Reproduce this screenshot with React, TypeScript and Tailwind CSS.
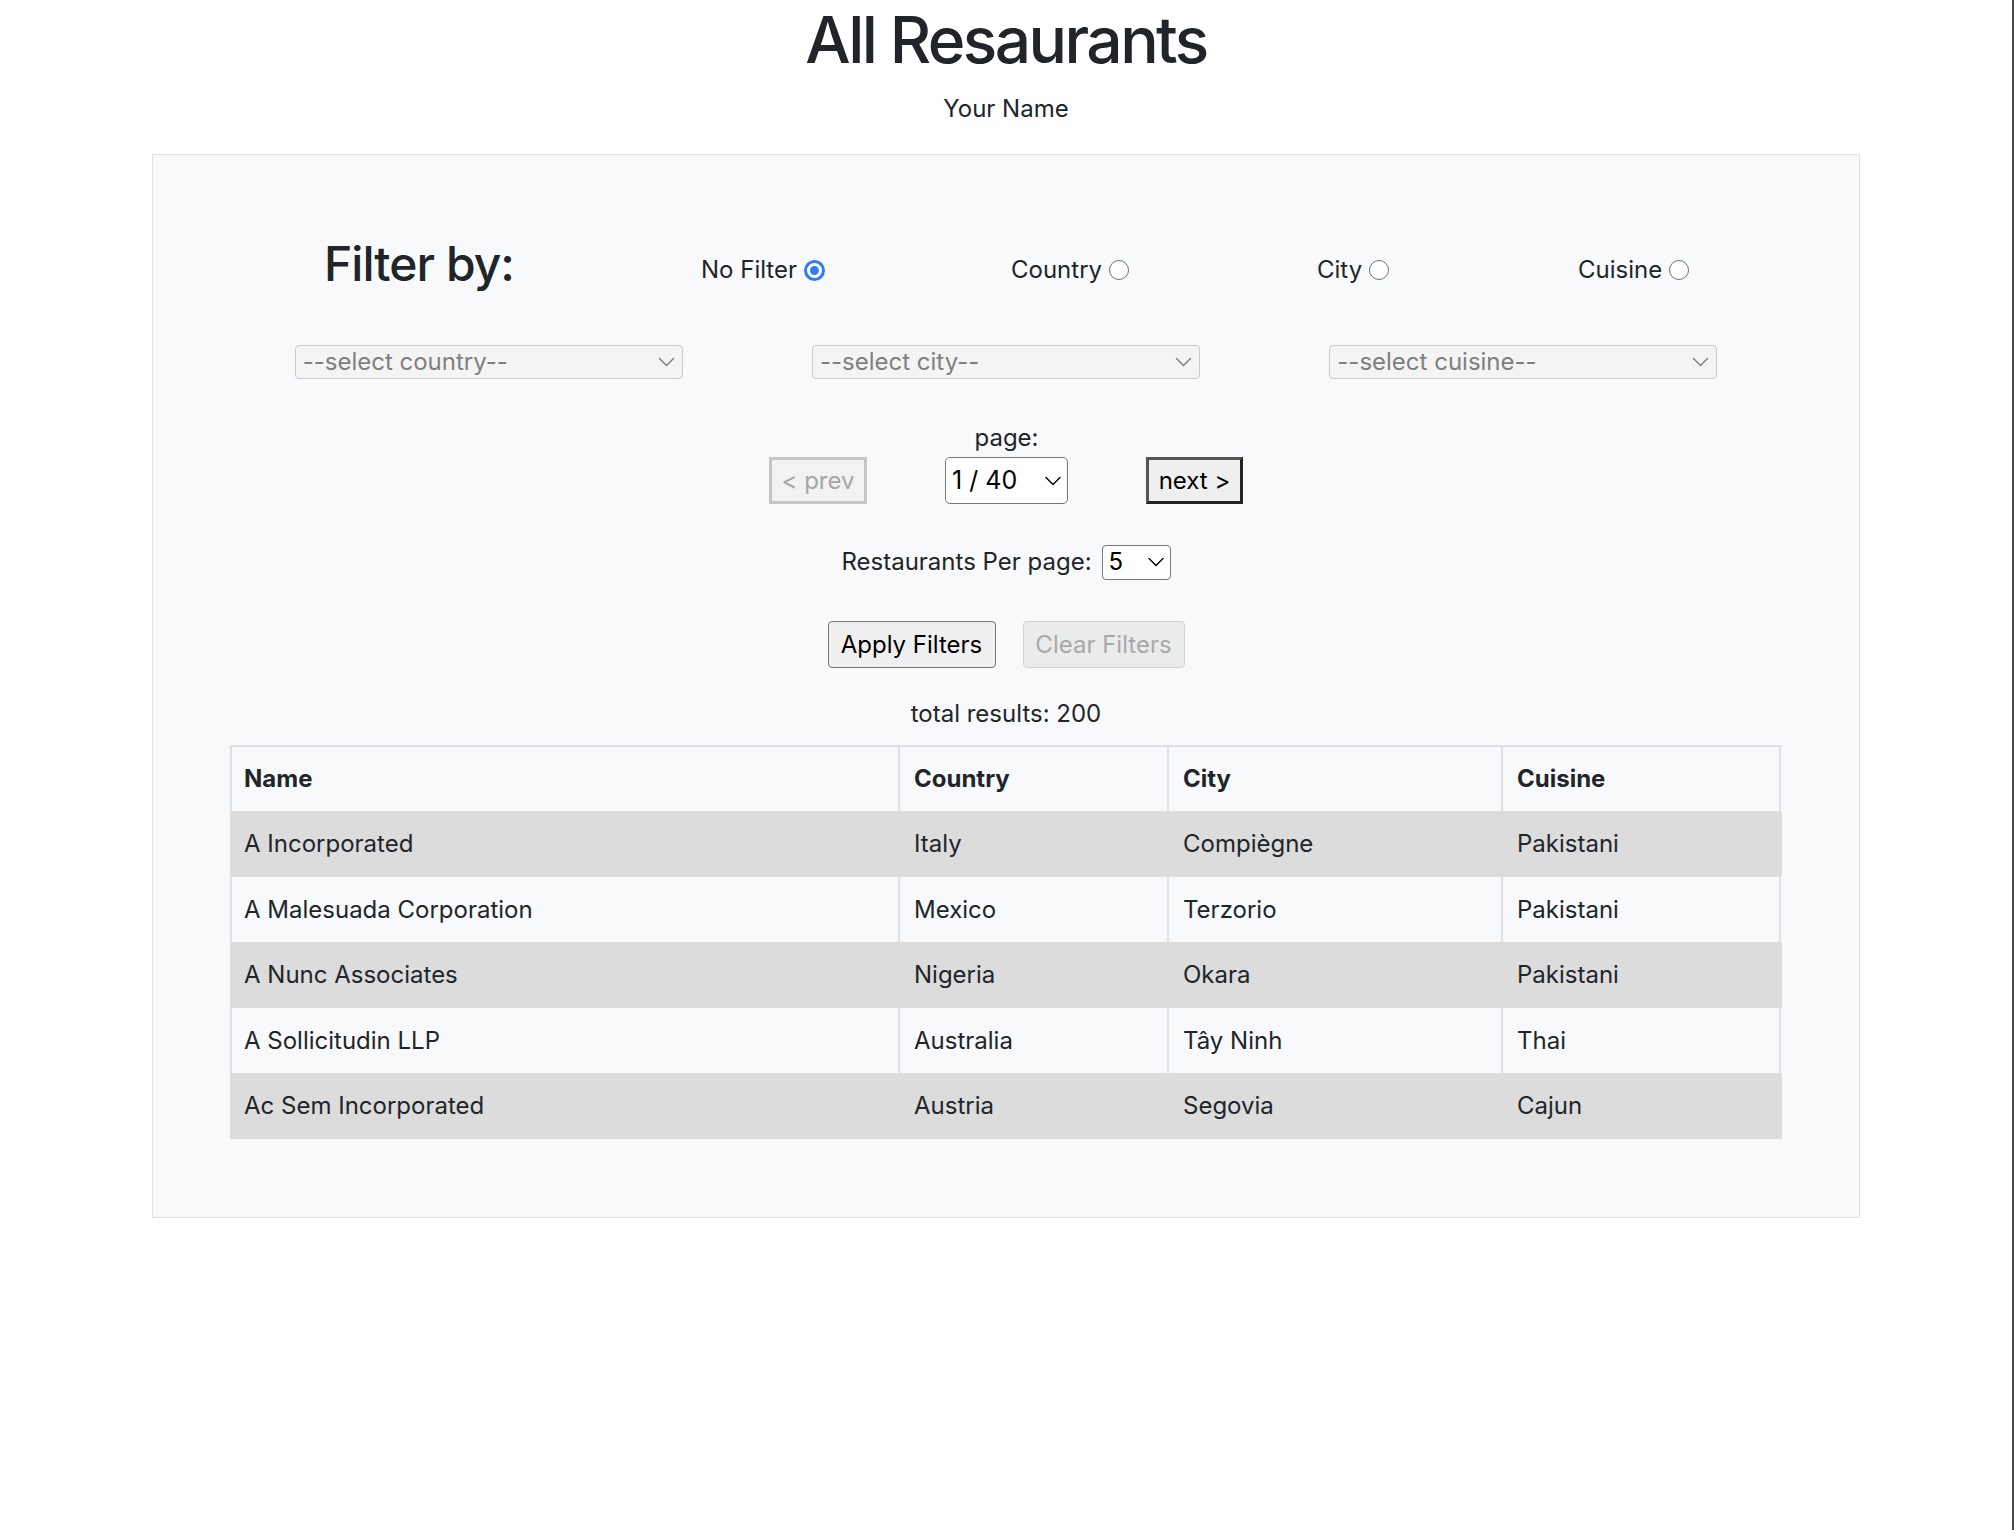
import React from "react";

const rows = [
  { name: "A Incorporated", country: "Italy", city: "Compiègne", cuisine: "Pakistani" },
  { name: "A Malesuada Corporation", country: "Mexico", city: "Terzorio", cuisine: "Pakistani" },
  { name: "A Nunc Associates", country: "Nigeria", city: "Okara", cuisine: "Pakistani" },
  { name: "A Sollicitudin LLP", country: "Australia", city: "Tây Ninh", cuisine: "Thai" },
  { name: "Ac Sem Incorporated", country: "Austria", city: "Segovia", cuisine: "Cajun" },
];

const filters = [
  { label: "No Filter", checked: true, w: "w-[310px]" },
  { label: "Country", checked: false, w: "w-[306px]" },
  { label: "City", checked: false, w: "w-[261px]" },
  { label: "Cuisine", checked: false, w: "" },
];

function Chevron({ className }: { className?: string }) {
  return (
    <svg viewBox="0 0 16 10" className={className} fill="none" stroke="currentColor" strokeWidth={1.4} strokeLinecap="round" strokeLinejoin="round">
      <polyline points="1,1.5 8,8.5 15,1.5" />
    </svg>
  );
}

function Radio({ checked }: { checked: boolean }) {
  if (checked) {
    return (
      <div className="flex h-[21px] w-[21px] items-center justify-center rounded-full border-[3px] border-[#2f7cf6] bg-white">
        <div className="h-[9px] w-[9px] rounded-full bg-[#2f7cf6]" />
      </div>
    );
  }
  return <div className="h-[20px] w-[20px] rounded-full border border-[#6f6f6f] bg-white" />;
}

function DisabledSelect({ text }: { text: string }) {
  return (
    <div className="flex h-[34px] w-[388px] items-center justify-between rounded-[4px] border border-[#cacaca] bg-[#f4f4f4] pl-[7px] pr-[7px] text-[24px] leading-none text-[#7f7f7f]">
      <span>{text}</span>
      <Chevron className="h-[10px] w-[17px] text-[#7a7a7a]" />
    </div>
  );
}

export default function App() {
  return (
    <div className="min-h-[1530px] w-full border-r-2 border-[#47474c] bg-white text-[#212529] [font-family:Inter,sans-serif]">
      <h1 className="h-[79px] text-center text-[64px] font-medium leading-[79px] tracking-[-0.04em]">All Resaurants</h1>
      <div className="mt-[12px] text-center text-[24px] leading-[36px]">Your Name</div>

      <div className="mx-auto mt-[27px] w-[1708px] border border-[#dfe2e5] bg-[#f8f9fa] px-[77px] pb-[78px] pt-[81px]">
        {/* Filter by row */}
        <div className="flex h-[60px] items-center">
          <h2 className="-mt-[4px] w-[388px] shrink-0 pl-[94px] text-[48px] font-medium leading-[58px] tracking-[-0.02em]">Filter by:</h2>
          <div className="flex items-center pl-[83px]">
            {filters.map((f) => (
              <label key={f.label} className={`mt-[8px] flex items-center gap-[7px] text-[24px] leading-[36px] ${f.w}`}>
                <span>{f.label}</span>
                <Radio checked={f.checked} />
              </label>
            ))}
          </div>
        </div>

        {/* Select row */}
        <div className="mt-[49px] grid grid-cols-3">
          <div className="flex justify-center">
            <DisabledSelect text="--select country--" />
          </div>
          <div className="flex justify-center">
            <DisabledSelect text="--select city--" />
          </div>
          <div className="flex justify-center">
            <DisabledSelect text="--select cuisine--" />
          </div>
        </div>

        {/* Pagination */}
        <div className="mt-[41px] flex items-end justify-center gap-[78px]">
          <button className="h-[47px] w-[98px] border-[3px] border-[#c6c6c6] bg-[#f2f2f2] text-[24px] text-[#a6a6a6]">&lt; prev</button>
          <div className="flex flex-col items-center">
            <span className="text-[24px] leading-[36px]">page:</span>
            <div className="mt-[1px] flex h-[47px] w-[123px] items-center justify-between rounded-[5px] border border-[#767676] bg-white pl-[6px] pr-[6px] text-[25px] text-black">
              <span>1 / 40</span>
              <Chevron className="h-[10px] w-[16px] text-black" />
            </div>
          </div>
          <button className="h-[47px] w-[97px] border-[3px] border-t-[#555555] border-l-[#555555] border-r-[#222222] border-b-[#222222] bg-[#efefef] text-[24px] text-black">next &gt;</button>
        </div>

        {/* Per page */}
        <div className="mt-[40px] flex items-center justify-center gap-[10px]">
          <span className="text-[24px] leading-[36px]">Restaurants Per page:</span>
          <div className="flex h-[35px] w-[69px] items-center justify-between rounded-[4px] border border-[#767676] bg-white pl-[6px] pr-[6px] text-[24px] text-black">
            <span>5</span>
            <Chevron className="h-[10px] w-[16px] text-black" />
          </div>
        </div>

        {/* Buttons */}
        <div className="mt-[41px] flex justify-center gap-[27px]">
          <button className="h-[47px] w-[168px] rounded-[4px] border border-[#767676] bg-[#efefef] text-[24px] text-black">Apply Filters</button>
          <button className="h-[47px] w-[162px] rounded-[4px] border border-[#d3d3d3] bg-[#eaebeb] text-[24px] text-[#a9a9a9]">Clear Filters</button>
        </div>

        <div className="mt-[28px] text-center text-[24px] leading-[36px]">total results: 200</div>

        {/* Table */}
        <div className="mt-[13px] text-[24px] leading-[36px]">
          <div className="grid h-[66px] grid-cols-[670px_269px_334px_278px] border-t-2 border-[#dee2e6] font-bold">
            <div className="flex items-center border-x-2 border-[#dee2e6] pl-[12px]">Name</div>
            <div className="flex items-center border-r-2 border-[#dee2e6] pl-[14px]">Country</div>
            <div className="flex items-center border-r-2 border-[#dee2e6] pl-[14px]">City</div>
            <div className="flex items-center border-r-2 border-[#dee2e6] pl-[14px]">Cuisine</div>
          </div>
          {rows.map((r, i) =>
            i % 2 === 0 ? (
              <div key={r.name} className="grid h-[66px] grid-cols-[670px_269px_334px_278px] bg-[#dcdcdc]">
                <div className="flex items-center pl-[14px]">{r.name}</div>
                <div className="flex items-center pl-[14px]">{r.country}</div>
                <div className="flex items-center pl-[14px]">{r.city}</div>
                <div className="flex items-center pl-[14px]">{r.cuisine}</div>
              </div>
            ) : (
              <div key={r.name} className="grid h-[65px] grid-cols-[670px_269px_334px_278px]">
                <div className="flex items-center border-x-2 border-[#dee2e6] pl-[12px]">{r.name}</div>
                <div className="flex items-center border-r-2 border-[#dee2e6] pl-[14px]">{r.country}</div>
                <div className="flex items-center border-r-2 border-[#dee2e6] pl-[14px]">{r.city}</div>
                <div className="flex items-center border-r-2 border-[#dee2e6] pl-[14px]">{r.cuisine}</div>
              </div>
            )
          )}
        </div>
      </div>
    </div>
  );
}
